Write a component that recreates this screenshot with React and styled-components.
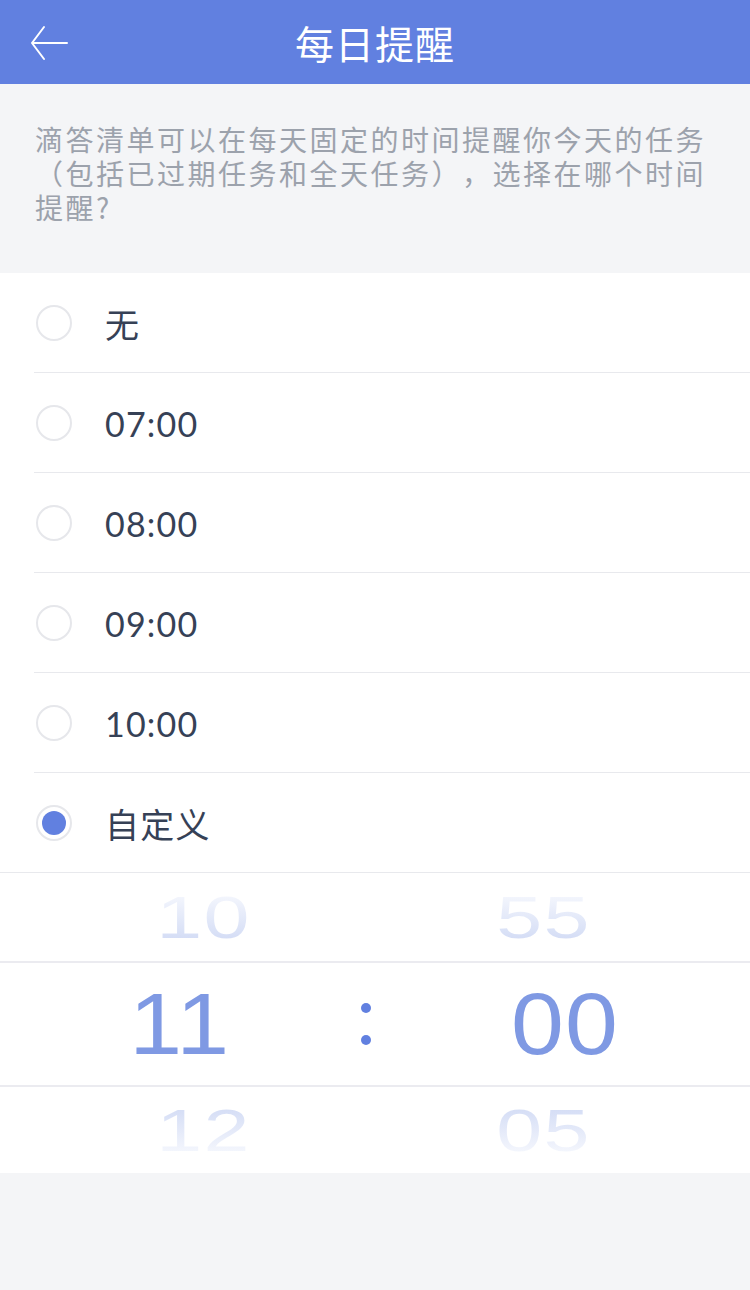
import React from 'react';
import styled, { createGlobalStyle } from 'styled-components';

const GlobalStyle = createGlobalStyle`
  html, body {
    margin: 0;
    padding: 0;
    background: #f4f5f7;
    font-family: "Noto Sans CJK SC", "Noto Sans", sans-serif;
  }
`;

const Page = styled.div`
  width: 750px;
  min-height: 1290px;
  background: #f4f5f7;
`;

const Header = styled.header`
  height: 84px;
  background: #6180e0;
  display: flex;
  align-items: center;
  justify-content: center;
  position: relative;
`;

const BackButton = styled.button`
  position: absolute;
  left: 27px;
  top: 23px;
  width: 42px;
  height: 40px;
  padding: 0;
  border: none;
  background: none;
  display: flex;
  align-items: center;
  justify-content: center;
`;

const Title = styled.h1`
  margin: 0;
  color: #fff;
  font-size: 39px;
  font-weight: 400;
  letter-spacing: 1px;
`;

const Intro = styled.p`
  margin: 0;
  width: 688px;
  padding: 38px 27px 36px 35px;
  height: 115px;
  font-size: 28px;
  line-height: 34px;
  color: #9ca2ac;
  letter-spacing: 2.5px;
  text-spacing-trim: space-all;
`;

const List = styled.ul`
  margin: 0;
  padding: 0;
  list-style: none;
  background: #fff;
`;

const Row = styled.li`
  height: 100px;
  display: flex;
  align-items: center;
  padding-left: 36px;
  position: relative;

  &::after {
    content: '';
    position: absolute;
    left: ${p => (p.$last ? '0' : '34px')};
    right: 0;
    bottom: 0;
    height: 1px;
    background: #e8e9ed;
  }
`;

const Radio = styled.span`
  width: 32px;
  height: 32px;
  border-radius: 50%;
  border: 2px solid #e6e7eb;
  display: flex;
  align-items: center;
  justify-content: center;
  flex-shrink: 0;

  &::before {
    content: '';
    width: 24px;
    height: 24px;
    border-radius: 50%;
    background: ${p => (p.$checked ? '#6180e0' : 'transparent')};
  }
`;

const Label = styled.span`
  margin-left: 33px;
  font-size: 34px;
  color: #364156;
  font-family: "Lato", "Noto Sans CJK SC", sans-serif;
  letter-spacing: 1.2px;
`;

const Picker = styled.div`
  background: #fff;
  height: 300px;
  display: grid;
  grid-template-rows: 88px 126px 86px;
`;

const PickerRow = styled.div`
  display: grid;
  grid-template-columns: 360px 12px 1fr;
  align-items: center;
  border-top: ${p => (p.$selected ? '2px solid #ebebf0' : 'none')};
  border-bottom: ${p => (p.$selected ? '2px solid #ebebf0' : 'none')};
`;

const Cell = styled.div`
  font-family: "Liberation Sans", Arial, sans-serif;
  text-align: center;
  line-height: 1;
  justify-self: center;
  letter-spacing: 1px;
  font-size: ${p => (p.$faded ? '78px' : '88px')};
  color: ${p => (p.$faded ? 'transparent' : '#7f99e3')};
  transform: ${p => (p.$faded ? 'scale(1.06, 0.76)' : 'scaleX(1.08)')};
  background: ${p =>
    p.$faded
      ? `linear-gradient(${p.$up ? '180deg' : '0deg'}, #f5f7fd 10%, #d3dcf5 90%)`
      : 'none'};
  -webkit-background-clip: ${p => (p.$faded ? 'text' : 'border-box')};
  background-clip: ${p => (p.$faded ? 'text' : 'border-box')};
`;

const HourCell = styled(Cell)`
  grid-column: 1;
  margin-left: ${p => (p.$faded ? '46px' : '0')};
`;

const MinuteCell = styled(Cell)`
  grid-column: 3;
  margin-left: ${p => (p.$faded ? '-36px' : '8px')};
`;

const Colon = styled.div`
  grid-column: 2;
  justify-self: center;
  display: flex;
  flex-direction: column;
  gap: 22px;

  span {
    width: 10px;
    height: 10px;
    border-radius: 50%;
    background: #6180e0;
  }
`;

const options = ['无', '07:00', '08:00', '09:00', '10:00', '自定义'];

const App = () => (
  <Page>
    <GlobalStyle />
    <Header>
      <BackButton aria-label="返回">
        <svg width="40" height="36" viewBox="0 0 40 36" fill="none">
          <path d="M39 18H4M16 2L4 18L16 34" stroke="#fff" strokeWidth="2" strokeLinecap="round" strokeLinejoin="round" />
        </svg>
      </BackButton>
      <Title>每日提醒</Title>
    </Header>

    <Intro>
      滴答清单可以在每天固定的时间提醒你今天的任务（包括已过期任务和全天任务），选择在哪个时间提醒?
    </Intro>

    <List>
      {options.map((opt, i) => (
        <Row key={opt} $last={i === options.length - 1}>
          <Radio $checked={opt === '自定义'} />
          <Label>{opt}</Label>
        </Row>
      ))}
    </List>

    <Picker>
      <PickerRow>
        <HourCell $faded $up>10</HourCell>
        <MinuteCell $faded $up>55</MinuteCell>
      </PickerRow>
      <PickerRow $selected>
        <HourCell>11</HourCell>
        <Colon><span /><span /></Colon>
        <MinuteCell>00</MinuteCell>
      </PickerRow>
      <PickerRow>
        <HourCell $faded>12</HourCell>
        <MinuteCell $faded>05</MinuteCell>
      </PickerRow>
    </Picker>
  </Page>
);

export default App;
